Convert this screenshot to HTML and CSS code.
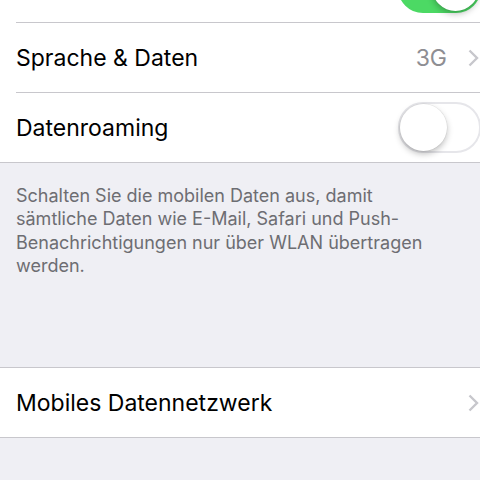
FILE: index.html
```html
<!DOCTYPE html>
<html>
<head>
<meta name="viewport" content="width=device-width, initial-scale=1">
<link rel="stylesheet" href="styles.css">
</head>
<body>

<div class="screen">
  <ul class="group first">
    <li class="row">
      <span class="label"></span>
      <span class="switch on"><span class="knob"></span></span>
    </li>
    <li class="row">
      <span class="label">Sprache &amp; Daten</span>
      <span class="detail">3G</span>
      <svg class="chevron" width="11" height="18" viewBox="0 0 11 18"><path d="M1.5 1.5 L9 9 L1.5 16.5" fill="none" stroke="#c7c7cc" stroke-width="2.4"/></svg>
    </li>
    <li class="row">
      <span class="label">Datenroaming</span>
      <span class="switch"><span class="knob"></span></span>
    </li>
  </ul>

  <p class="footer">Schalten Sie die mobilen Daten aus, damit sämtliche Daten wie E-Mail, Safari und Push-Benachrichtigungen nur über WLAN übertragen werden.</p>

  <ul class="group">
    <li class="row">
      <span class="label">Mobiles Datennetzwerk</span>
      <svg class="chevron" width="11" height="18" viewBox="0 0 11 18"><path d="M1.5 1.5 L9 9 L1.5 16.5" fill="none" stroke="#c7c7cc" stroke-width="2.4"/></svg>
    </li>
  </ul>
</div>

</body>
</html>
```

FILE: styles.css
```css
body {
    margin: 0;
    background-color: #efeff4;
    font-family: Inter, "Liberation Sans", sans-serif;
}

.screen {
    width: 480px;
    height: 480px;
    overflow: hidden;
}

/* list scrolled up so the first cell is mostly hidden */
.group {
    list-style: none;
    margin: 0;
    padding: 0 0 0 16px;
    background-color: #fff;
    border-top: 1px solid #c8c7cc;
    border-bottom: 1px solid #c8c7cc;
}

.group.first {
    margin-top: -48px;
}

.row {
    display: flex;
    align-items: center;
    height: 69px;
    padding-right: 1px;
    border-bottom: 1px solid #c8c7cc;
}

.row:last-child {
    border-bottom: none;
}

.label {
    flex: 1;
    font-size: 23px;
    color: #000;
}

.detail {
    font-size: 23px;
    color: #8e8e93;
    margin-right: 21px;
}

.switch {
    position: relative;
    width: 79px;
    height: 47px;
    border-radius: 25px;
    border: 2px solid #e6e6ea;
    background-color: #fff;
    box-sizing: content-box;
    margin-right: -2px;
}

.switch.on {
    background-color: #4cd964;
    border-color: #4cd964;
}

.knob {
    position: absolute;
    top: 0;
    left: 0;
    width: 47px;
    height: 47px;
    border-radius: 50%;
    background-color: #fff;
    box-shadow: 0 3px 6px rgba(0, 0, 0, 0.25), 0 0 0 0.5px rgba(0, 0, 0, 0.08);
}

.switch.on .knob {
    left: 32px;
}

.footer {
    margin: 0;
    padding: 21px 28px 90px 16px;
    font-size: 18px;
    line-height: 23.3px;
    color: #6d6d72;
}
```
